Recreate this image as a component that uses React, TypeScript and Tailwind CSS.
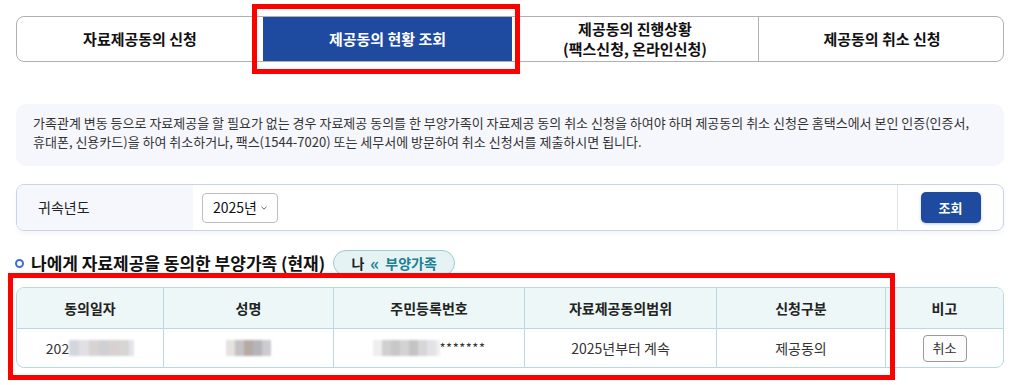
import React from "react";

const font = { fontFamily: '"Noto Sans CJK KR", "Noto Sans", sans-serif' };

function Blur({ widths, colors }: { widths: number[]; colors: string[] }) {
  return (
    <span className="inline-flex items-center align-middle blur-[1px]">
      {widths.map((w, i) => (
        <span key={i} className="inline-block h-[16px]" style={{ width: w, background: colors[i % colors.length] }} />
      ))}
    </span>
  );
}

export default function App() {
  return (
    <div className="relative w-[1023px] h-[385px] bg-white overflow-hidden text-[#222]" style={font}>
      <div className="ml-[16px] w-[988px] pt-[16px]">
        {/* Tabs */}
        <div className="grid grid-cols-[246px_249px_246px_247px] h-[46px] border border-[#b0b0b0] rounded-[8px] overflow-hidden">
          <div className="flex items-center justify-center text-[15px] font-bold text-[#111]">자료제공동의 신청</div>
          <div className="flex items-center justify-center text-[15px] font-bold text-white bg-[#1e4aa0]">제공동의 현황 조회</div>
          <div className="flex flex-col items-center justify-center text-[15px] font-bold text-[#111] leading-[20px]">
            <span>제공동의 진행상황</span>
            <span>(팩스신청, 온라인신청)</span>
          </div>
          <div className="flex items-center justify-center text-[15px] font-bold text-[#111] border-l border-[#b0b0b0]">제공동의 취소 신청</div>
        </div>

        {/* Info */}
        <div className="mt-[42px] h-[62px] rounded-[10px] bg-[#f6f7fc] px-[17px] pt-[9px] text-[13px] leading-[19px] text-[#333]">
          가족관계 변동 등으로 자료제공을 할 필요가 없는 경우 자료제공 동의를 한 부양가족이 자료제공 동의 취소 신청을 하여야 하며 제공동의 취소 신청은 홈택스에서 본인 인증(인증서,
          <br />
          휴대폰, 신용카드)을 하여 취소하거나, 팩스(1544-7020) 또는 세무서에 방문하여 취소 신청서를 제출하시면 됩니다.
        </div>

        {/* Search */}
        <div className="mt-[18px] h-[47px] flex rounded-[8px] border border-[#c8d3ea] overflow-hidden shadow-[0_3px_4px_rgba(0,0,0,0.04)]">
          <div className="w-[176px] bg-[#f5f7fc] flex items-center pl-[21px] text-[14px] text-[#222]">귀속년도</div>
          <div className="flex-1 flex items-center pl-[9px]">
            <div className="h-[30px] w-[76px] rounded-[4px] border border-[#bdbdbd] flex items-center pl-[10px] gap-[3px] text-[14px] text-[#111]">
              <span>2025년</span>
              <svg width="8" height="6" viewBox="0 0 8 6"><path d="M1.5 1.8 L4 4.2 L6.5 1.8" fill="none" stroke="#666" strokeWidth="1" /></svg>
            </div>
          </div>
          <div className="w-[106px] border-l border-[#dde3f0] flex items-center justify-center">
            <div className="w-[60px] h-[31px] rounded-[5px] bg-[#1e4aa0] text-white text-[13px] font-bold flex items-center justify-center shadow-[0_1px_3px_rgba(30,74,160,0.3)]">조회</div>
          </div>
        </div>

        {/* Heading */}
        <div className="mt-[19px] flex items-center h-[26px]">
          <span className="ml-[-1px] w-[9px] h-[9px] rounded-full border-2 border-[#3d6fd3]" />
          <span className="ml-[7px] text-[17px] font-bold text-[#111]">나에게 자료제공을 동의한 부양가족 (현재)</span>
          <span className="ml-[8px] h-[26px] w-[122px] rounded-full border border-[#9ecbd2] bg-[#e5f3f5] flex items-center justify-center gap-[6px] text-[14px] font-bold">
            <span className="text-[#222]">나</span>
            <span className="text-[#1f7f95] text-[17px] leading-none mt-[-2px]">«</span>
            <span className="text-[#1f7f95]">부양가족</span>
          </span>
        </div>

        {/* Table */}
        <div className="mt-[11px] border border-[#b9d9de] rounded-[8px] overflow-hidden">
          <div className="grid grid-cols-[147px_170px_191px_192px_169px_117px] h-[41px] bg-[#edf7f7] border-b border-[#b9d9de] text-[14px] font-bold text-[#222]">
            <div className="flex items-center justify-center border-r border-[#b9d9de]">동의일자</div>
            <div className="flex items-center justify-center border-r border-[#b9d9de]">성명</div>
            <div className="flex items-center justify-center border-r border-[#b9d9de]">주민등록번호</div>
            <div className="flex items-center justify-center border-r border-[#b9d9de]">자료제공동의범위</div>
            <div className="flex items-center justify-center border-r border-[#b9d9de]">신청구분</div>
            <div className="flex items-center justify-center">비고</div>
          </div>
          <div className="grid grid-cols-[147px_170px_191px_192px_169px_117px] h-[38px] text-[14px] text-[#333]">
            <div className="flex items-center justify-center border-r border-[#b9d9de]">
              <span>202</span>
              <Blur widths={[10, 10, 10, 10, 10, 10, 5]} colors={["#d4d6de", "#e0e0e6", "#d8d2d2", "#cfcfd4", "#d9d1d1", "#d5d6d2", "#e3e4ea"]} />
            </div>
            <div className="flex items-center justify-center border-r border-[#b9d9de]">
              <Blur widths={[9, 9, 9, 9, 9]} colors={["#e6e2e0", "#c4c2c4", "#b6aaa6", "#b4b5ba", "#cbcbd0"]} />
            </div>
            <div className="flex items-center justify-center border-r border-[#b9d9de]">
              <Blur widths={[9, 9, 9, 9, 9, 9, 9, 4]} colors={["#eeeeee", "#d0d0d0", "#c8c8c8", "#d2d2d2", "#c4c4c4", "#d6d6d6", "#e2e2e8", "#eeeeee"]} />
              <span className="text-[13px] tracking-[0.5px]">*******</span>
            </div>
            <div className="flex items-center justify-center border-r border-[#b9d9de]">2025년부터 계속</div>
            <div className="flex items-center justify-center border-r border-[#b9d9de]">제공동의</div>
            <div className="flex items-center justify-center">
              <span className="w-[44px] h-[27px] rounded-[4px] border border-[#999] flex items-center justify-center text-[13px] text-[#333] bg-[#fcfcfc]">취소</span>
            </div>
          </div>
        </div>
      </div>

      {/* Annotation overlays */}
      <div className="absolute left-[252px] top-[4px] w-[268px] h-[70px] border-[5px] border-[#ff0000]" />
      <div className="absolute left-[8px] top-[273px] w-[887px] h-[107px] border-[5px] border-[#ff0000]" />
    </div>
  );
}
